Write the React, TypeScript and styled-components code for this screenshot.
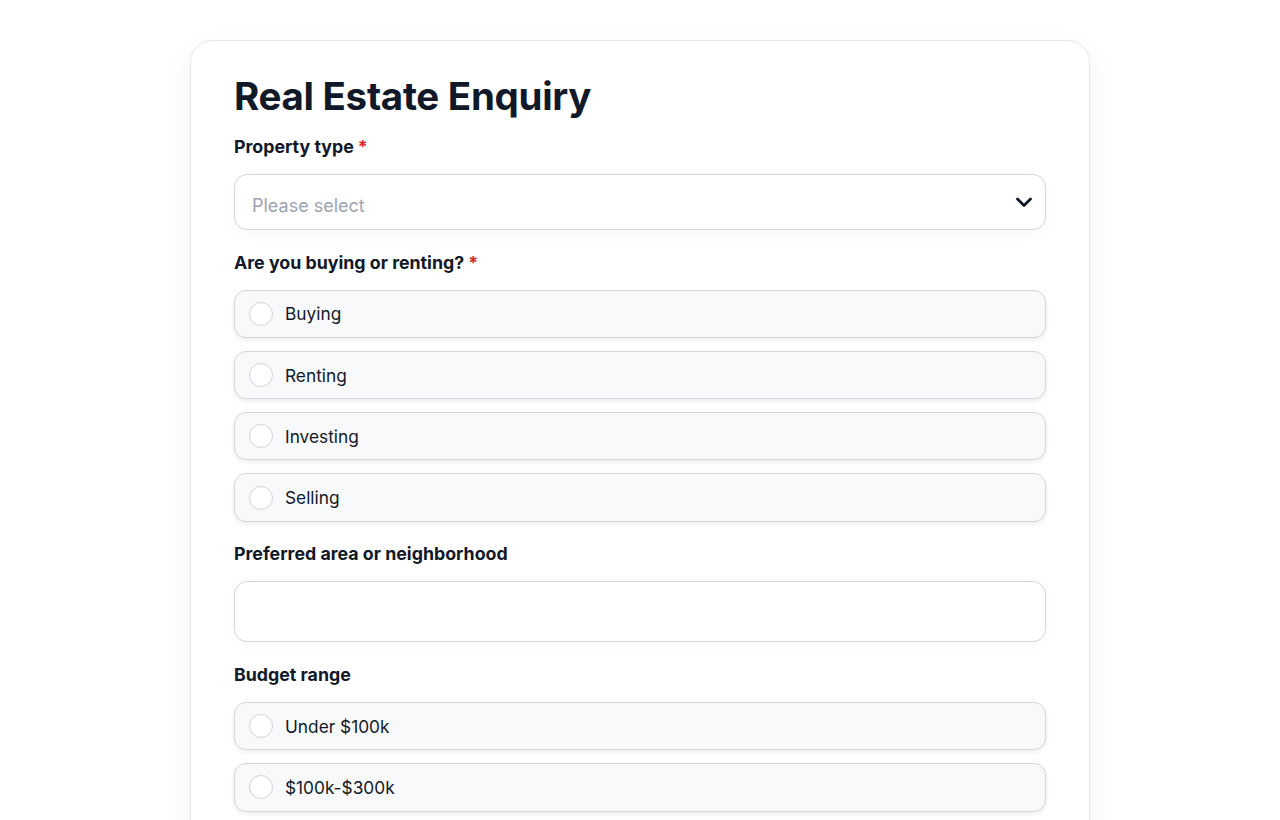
import React from "react";
import styled, { createGlobalStyle } from "styled-components";

const Global = createGlobalStyle`
  html, body { margin: 0; padding: 0; background: #ffffff; }
  body { font-family: "Inter", "Noto Sans", sans-serif; color: #111827; }
  * { box-sizing: border-box; }
`;

const Page = styled.div`
  display: flex;
  justify-content: center;
  padding-top: 40px;
`;

const Card = styled.form`
  width: 900px;
  background: #fff;
  border: 1px solid #e5e7eb;
  border-radius: 22px;
  box-shadow: 0 10px 30px rgba(17, 24, 39, 0.05);
  padding: 31px 43px 40px;
  display: flex;
  flex-direction: column;
`;

const Title = styled.h1`
  margin: 0 0 15px;
  font-size: 38.5px;
  line-height: 48px;
  font-weight: 700;
  letter-spacing: -0.3px;
  color: #111827;
`;

const Field = styled.div`
  display: flex;
  flex-direction: column;
  margin-bottom: 20.6px;
`;

const Label = styled.label`
  font-size: 17.8px;
  line-height: 24px;
  font-weight: 650;
  color: #111827;
  margin-bottom: 15px;
`;

const Req = styled.span`
  color: #dc2626;
  margin-left: 4px;
`;

const SelectBox = styled.div`
  height: 56px;
  border: 1px solid #d1d5db;
  border-radius: 13px;
  display: flex;
  align-items: center;
  justify-content: space-between;
  padding: 0 12px 0 17px;
  box-shadow: 0 4px 14px rgba(17, 24, 39, 0.03);
  background: #fff;
`;

const Placeholder = styled.span`
  font-size: 18px;
  color: #9ca3af;
  padding-top: 6px;
`;

const TextInput = styled.div`
  height: 61px;
  border: 1px solid #d1d5db;
  border-radius: 13px;
  background: #fff;
  box-shadow: 0 4px 14px rgba(17, 24, 39, 0.03);
`;

const Options = styled.div`
  display: flex;
  flex-direction: column;
  gap: 13px;
`;

const Option = styled.div`
  height: 48.3px;
  border: 1px solid #d4d6dd;
  border-radius: 12px;
  background: #f8f9fb;
  box-shadow: 0 2px 4px rgba(17, 24, 39, 0.08);
  display: flex;
  align-items: center;
  padding-left: 14px;
  gap: 12px;
`;

const Radio = styled.span`
  width: 24px;
  height: 24px;
  border-radius: 50%;
  border: 1.5px solid #cfd2d9;
  background: #fff;
  flex: none;
`;

const OptionText = styled.span`
  font-size: 17.3px;
  font-weight: 400;
  color: #111827;
`;

const RadioGroup = ({ items }: { items: string[] }) => (
  <Options>
    {items.map((t) => (
      <Option key={t}>
        <Radio />
        <OptionText>{t}</OptionText>
      </Option>
    ))}
  </Options>
);

export default function App() {
  return (
    <>
      <Global />
      <Page>
        <Card>
          <Title>Real Estate Enquiry</Title>
          <Field>
            <Label>
              Property type<Req>*</Req>
            </Label>
            <SelectBox>
              <Placeholder>Please select</Placeholder>
              <svg width="18" height="18" viewBox="0 0 18 18" fill="none">
                <path d="M2.5 6 9 12.5 15.5 6" stroke="#111827" strokeWidth="2.8" strokeLinecap="round" strokeLinejoin="round" />
              </svg>
            </SelectBox>
          </Field>
          <Field>
            <Label>
              Are you buying or renting?<Req>*</Req>
            </Label>
            <RadioGroup items={["Buying", "Renting", "Investing", "Selling"]} />
          </Field>
          <Field>
            <Label>Preferred area or neighborhood</Label>
            <TextInput />
          </Field>
          <Field>
            <Label>Budget range</Label>
            <RadioGroup items={["Under $100k", "$100k-$300k", "$300k-$500k", "Over $500k"]} />
          </Field>
        </Card>
      </Page>
    </>
  );
}
